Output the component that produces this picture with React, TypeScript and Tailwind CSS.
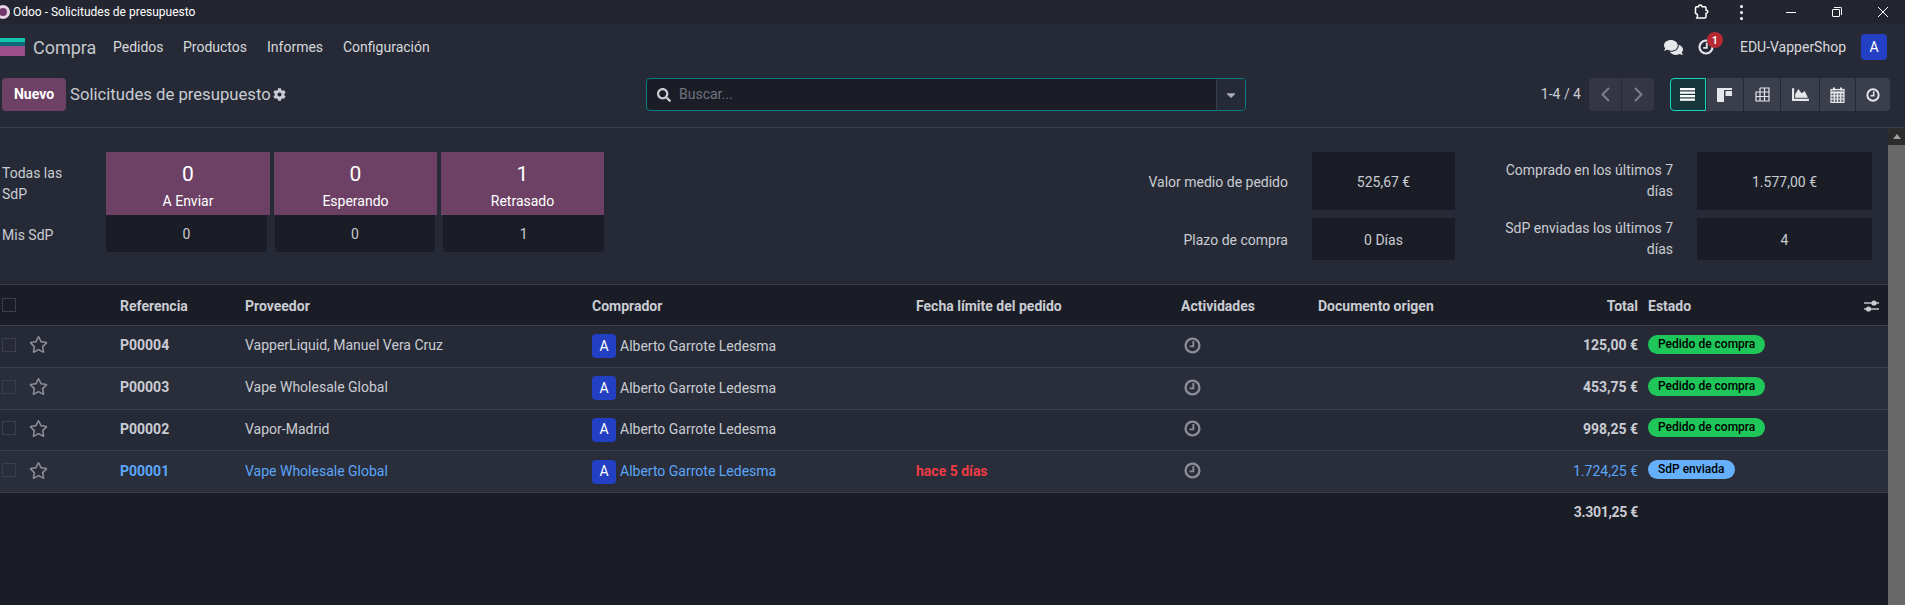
import React from "react";
import {
  FaCog,
  FaComments,
  FaSearch,
  FaRegStar,
  FaChartArea,
  FaCaretDown,
} from "react-icons/fa";

const tableCols =
  "grid grid-cols-[120px_125px_347px_324px_265px_137px_220px_100px_1fr]";

type Row = {
  ref: string;
  vendor: string;
  deadline?: string;
  total: string;
  status: string;
  late?: boolean;
};

const rows: Row[] = [
  { ref: "P00004", vendor: "VapperLiquid, Manuel Vera Cruz", total: "125,00 €", status: "Pedido de compra" },
  { ref: "P00003", vendor: "Vape Wholesale Global", total: "453,75 €", status: "Pedido de compra" },
  { ref: "P00002", vendor: "Vapor-Madrid", total: "998,25 €", status: "Pedido de compra" },
  { ref: "P00001", vendor: "Vape Wholesale Global", deadline: "hace 5 días", total: "1.724,25 €", status: "SdP enviada", late: true },
];

const ClockIcon = ({ size, color }: { size: number; color: string }) => (
  <svg width={size} height={size} viewBox="0 0 16 16" fill="none" stroke={color}>
    <circle cx="8" cy="8" r="6.500" strokeWidth="2.200" />
    <path d="M8.800 3.800v5H5.200" strokeWidth="1.800" />
  </svg>
);

const ListIcon = () => (
  <svg width="16" height="13" viewBox="0 0 16 13" fill="#fff">
    <rect y="0" width="15" height="2.300" />
    <rect y="3.500" width="15" height="2.300" />
    <rect y="7" width="15" height="2.300" />
    <rect y="10.500" width="15" height="2.300" />
  </svg>
);

const KanbanIcon = () => (
  <svg width="16" height="14" viewBox="0 0 16 14" fill="#e5e7eb">
    <rect x="0" y="0" width="15" height="2" />
    <path d="M0 2h7v12H0z" />
    <rect x="8.500" y="3" width="6.500" height="5" />
  </svg>
);

const PivotIcon = () => (
  <svg width="15" height="15" viewBox="0 0 15 15" fill="none" stroke="#e5e7eb" strokeWidth="1.200">
    <path d="M5 1h9v13H1V5h13M5 1v13M9.500 1v13M1 9.500h13" />
  </svg>
);

const CalendarIcon = () => (
  <svg width="15" height="16" viewBox="0 0 15 16" fill="none" stroke="#e5e7eb" strokeWidth="1.200">
    <rect x="1" y="2.500" width="13" height="13" fill="#e5e7eb" fillOpacity="0.25" />
    <path d="M1 5.500h13" strokeWidth="2" />
    <path d="M1 8.800h13M1 12h13M4.300 6v9M7.500 6v9M10.700 6v9" />
    <path d="M4 0.500v3M11 0.500v3" strokeWidth="2" />
  </svg>
);

const ExtensionIcon = () => (
  <svg width="16" height="16" viewBox="0 0 16 16" fill="none" stroke="#fff" strokeWidth="1.500">
    <path
      d="M1.500 4c0-.8.5-1.300 1.200-1.300h1.800c0-2.200 3.500-2.200 3.500 0h2.800c.7 0 1.200.5 1.200 1.200v2.300c2.300-.3 2.300 3.300 0 3v3.600c0 .7-.5 1.200-1.200 1.200H2.500c1.800-1.300 1.300-4.500-1-4.500z"
      strokeLinejoin="round"
    />
  </svg>
);

const SlidersIcon = () => (
  <svg width="15" height="12" viewBox="0 0 15 12" fill="#c9ccd2">
    <rect y="2.300" width="15" height="1.400" />
    <rect y="8.300" width="15" height="1.400" />
    <circle cx="10" cy="3" r="2.600" />
    <circle cx="4.500" cy="9" r="2.600" />
  </svg>
);

const Chevron = ({ d }: { d: string }) => (
  <svg width="11" height="15" viewBox="0 0 11 15" fill="none" stroke="#7c7f8a" strokeWidth="2">
    <path d={d} />
  </svg>
);

const TitleBar = () => (
  <div className="h-[24px] shrink-0 bg-[#232630] flex items-center text-white text-[12px] leading-none">
    <span className="w-[14px] h-[14px] rounded-full border-[3px] border-[#e8d5e3] bg-[#71396a] -ml-[4px] mr-[3px]" />
    <span>Odoo - Solicitudes de presupuesto</span>
    <div className="ml-auto flex items-center">
      <ExtensionIcon />
      <div className="ml-[30px] flex flex-col gap-[3px]">
        <span className="w-[3px] h-[3px] rounded-full bg-white" />
        <span className="w-[3px] h-[3px] rounded-full bg-white" />
        <span className="w-[3px] h-[3px] rounded-full bg-white" />
      </div>
      <span className="ml-[43px] w-[10px] h-px bg-white" />
      <span className="ml-[36px] relative w-[10px] h-[10px]">
        <span className="absolute top-[2px] left-0 w-[8px] h-[8px] border border-white rounded-[1px]" />
        <span className="absolute top-0 left-[2px] w-[8px] h-[8px] border-t border-r border-white rounded-tr-[2px]" />
      </span>
      <svg className="ml-[36px] mr-[17px]" width="10" height="10" viewBox="0 0 10 10" stroke="#fff">
        <path d="M0 0l10 10M10 0L0 10" />
      </svg>
    </div>
  </div>
);

const NavBar = () => (
  <div className="h-[46px] shrink-0 flex items-center text-[#d7d9dd] text-[14px]">
    <div className="w-[25px] h-[18px] flex flex-col shrink-0">
      <span className="h-[4px] bg-[#14c4ae]" />
      <span className="h-[4px] bg-[#0f6a78]" />
      <span className="h-[10px] bg-[#9a4f8a] rounded-br-[1px]" />
    </div>
    <span className="ml-[8px] w-[80px] text-[18px] text-[#c3c6cc]">Compra</span>
    <span className="w-[70px] pt-[1px]">Pedidos</span>
    <span className="w-[84px] pt-[1px]">Productos</span>
    <span className="w-[76px] pt-[1px]">Informes</span>
    <span className="pt-[1px]">Configuración</span>
    <div className="ml-auto flex items-center">
      <FaComments className="text-[#e5e7eb] text-[19px]" />
      <div className="relative ml-[15px]">
        <ClockIcon size={16} color="#e5e7eb" />
        <span className="absolute -top-[7px] left-[9px] w-[16px] h-[16px] rounded-full bg-[#b52a32] text-white text-[10px] font-bold flex items-center justify-center">
          1
        </span>
      </div>
      <span className="ml-[26px] text-[14px]">EDU-VapperShop</span>
      <span className="ml-[15px] mr-[18px] w-[26px] h-[26px] rounded-[4px] bg-[#2340c4] text-white text-[14px] flex items-center justify-center">
        A
      </span>
    </div>
  </div>
);

const ControlPanel = () => (
  <div className="h-[58px] shrink-0 border-b border-[#3c3e4b] pb-[16px] pt-[8px] flex items-center text-[#c9ccd2]">
    <button className="ml-[2px] w-[64px] h-[33px] rounded-[4px] bg-[#6d4165] text-white text-[14px] font-bold">
      Nuevo
    </button>
    <span className="ml-[4px] w-[203px] text-[16.7px] whitespace-nowrap">Solicitudes de presupuesto</span>
    <FaCog className="text-[13px] text-[#c9ccd2]" />
    <div className="ml-[360px] w-[600px] h-[33px] flex rounded-[4px] border border-[#017e84] bg-[#1b1d26]">
      <div className="flex-1 flex items-center pl-[10px]">
        <FaSearch className="text-[14px] text-[#c9ccd2]" />
        <span className="ml-[8px] text-[14px] text-[#70737f]">Buscar...</span>
      </div>
      <div className="w-[29px] border-l border-[#3c3e4b] bg-[#262a36] rounded-r-[3px] flex items-center justify-center">
        <FaCaretDown className="text-[14px] text-[#a9acb4]" />
      </div>
    </div>
    <span className="ml-auto text-[14px]">1-4 / 4</span>
    <div className="ml-[8px] flex gap-px">
      <span className="w-[32px] h-[33px] rounded-l-[4px] bg-[#343743] flex items-center justify-center">
        <Chevron d="M9 1L2.500 7.500 9 14" />
      </span>
      <span className="w-[32px] h-[33px] rounded-r-[4px] bg-[#343743] flex items-center justify-center">
        <Chevron d="M2 1l6.500 6.500L2 14" />
      </span>
    </div>
    <div className="ml-[16px] mr-[15px] flex gap-px">
      <span className="w-[36px] h-[33px] rounded-l-[4px] border border-[#14d8c4] bg-[#17363a] flex items-center justify-center">
        <ListIcon />
      </span>
      <span className="w-[36px] h-[33px] bg-[#3b3e4b] flex items-center justify-center">
        <KanbanIcon />
      </span>
      <span className="w-[36px] h-[33px] bg-[#3b3e4b] flex items-center justify-center">
        <PivotIcon />
      </span>
      <span className="w-[38px] h-[33px] bg-[#3b3e4b] flex items-center justify-center">
        <FaChartArea className="text-[17px] text-[#e5e7eb]" />
      </span>
      <span className="w-[35px] h-[33px] bg-[#3b3e4b] flex items-center justify-center">
        <CalendarIcon />
      </span>
      <span className="w-[34px] h-[33px] rounded-r-[4px] bg-[#3b3e4b] flex items-center justify-center">
        <ClockIcon size={14} color="#e5e7eb" />
      </span>
    </div>
  </div>
);

const Dashboard = () => (
  <div className="h-[157px] border-b border-[#3c3e4b] pt-[24px] flex text-[14px] text-[#c9ccd2] leading-[21px]">
    <div className="w-[106px] pl-[2px] shrink-0">
      <div className="h-[63px] flex items-center w-[80px]">Todas las SdP</div>
      <div className="h-[37px] flex items-center pt-[3px]">Mis SdP</div>
    </div>
    <div className="w-[498px] shrink-0">
      <div className="flex gap-[4px] h-[63px]">
        {[
          ["0", "A Enviar", "w-[164px]"],
          ["0", "Esperando", "w-[163px]"],
          ["1", "Retrasado", "w-[163px]"],
        ].map(([n, label, w]) => (
          <div key={label} className={`${w} bg-[#6d4165] text-white flex flex-col items-center pt-[9px]`}>
            <span className="text-[21px] leading-[26px]">{n}</span>
            <span className="text-[14px] leading-[22px] mt-[3px]">{label}</span>
          </div>
        ))}
      </div>
      <div className="flex gap-[8px] h-[37px]">
        {["0", "0", "1"].map((n, i) => (
          <div key={i} className="w-[161px] bg-[#1b1d26] rounded-b-[4px] flex items-center justify-center pt-[2px]">
            {n}
          </div>
        ))}
      </div>
    </div>
    <div className="ml-auto mr-[16px] shrink-0 grid grid-cols-[208px_143px_242px_175px] grid-rows-[58px_42px] gap-y-[8px]">
      <div className="flex items-center justify-end pr-[24px] pt-[2px]">Valor medio de pedido</div>
      <div className="bg-[#1b1d26] flex items-center justify-center pt-[2px]">525,67 €</div>
      <div className="flex items-center justify-end pr-[24px] text-right">
        <span className="w-[175px]">Comprado en los últimos 7 días</span>
      </div>
      <div className="bg-[#1b1d26] flex items-center justify-center pt-[2px]">1.577,00 €</div>
      <div className="flex items-center justify-end pr-[24px] pt-[2px]">Plazo de compra</div>
      <div className="bg-[#1b1d26] flex items-center justify-center pt-[2px]">0 Días</div>
      <div className="flex items-center justify-end pr-[24px] text-right">
        <span className="w-[175px]">SdP enviadas los últimos 7 días</span>
      </div>
      <div className="bg-[#1b1d26] flex items-center justify-center pt-[2px]">4</div>
    </div>
  </div>
);

const TableHeader = () => (
  <div className={`${tableCols} h-[41px] shrink-0 bg-[#1b1d26] border-b border-[#3c3e4b] pt-[2px] items-center text-[14px] font-bold text-[#c9ccd2]`}>
    <div className="pl-[2px] -mt-[2px]">
      <span className="block w-[14px] h-[14px] border border-[#3c3e4b]" />
    </div>
    <span>Referencia</span>
    <span>Proveedor</span>
    <span>Comprador</span>
    <span>Fecha límite del pedido</span>
    <span>Actividades</span>
    <span>Documento origen</span>
    <span className="text-right">Total</span>
    <div className="pl-[10px] flex items-center justify-between pr-[9px]">
      <span>Estado</span>
      <SlidersIcon />
    </div>
  </div>
);

const TableRow = ({ row, striped }: { row: Row; striped: boolean }) => {
  const color = row.late ? "text-[#5aa6f8]" : "text-[#c9ccd2]";
  return (
    <div
      className={`${tableCols} h-[41.75px] shrink-0 border-b border-[#3c3e4b] items-center text-[14px] ${color} ${
        striped ? "bg-[#2a2e3a]" : "bg-[#262a36]"
      }`}
    >
      <div className="pl-[2px] flex items-center -mt-[3px]">
        <span className="block w-[14px] h-[14px] border border-[#3c3e4b]" />
        <FaRegStar className="ml-[13px] text-[19px] text-[#8a8d96]" />
      </div>
      <span className="font-bold -mt-[1px]">{row.ref}</span>
      <span className="-mt-[1px]">{row.vendor}</span>
      <div className="flex items-center">
        <span className="w-[24px] h-[24px] rounded-[4px] bg-[#2340c4] text-white flex items-center justify-center">
          A
        </span>
        <span className="ml-[4px]">Alberto Garrote Ledesma</span>
      </div>
      <span className="font-bold text-[#ef3b45] -mt-[1px]">{row.deadline}</span>
      <div className="pl-[3px] -mt-[2px]">
        <ClockIcon size={17} color="#8a8d96" />
      </div>
      <span />
      <span className={`text-right -mt-[1px] ${row.late ? "" : "font-bold"}`}>{row.total}</span>
      <div className="pl-[10px] flex -mt-[4px]">
        <span
          className={`h-[19px] px-[10px] rounded-full text-[12px] font-medium leading-[19px] text-black ${
            row.late ? "bg-[#66b0fb]" : "bg-[#1fc75a]"
          }`}
        >
          {row.status}
        </span>
      </div>
    </div>
  );
};

const ScrollBar = () => (
  <div className="w-[17px] shrink-0 bg-[#2c2c2c] flex flex-col">
    <div className="h-[17px] flex items-center justify-center">
      <span className="border-x-[4px] border-x-transparent border-b-[5px] border-b-[#a0a0a0]" />
    </div>
    <div className="flex-1 bg-[#686868]" />
  </div>
);

export default function App() {
  return (
    <div className="w-screen h-screen overflow-hidden flex flex-col bg-[#262a36] font-['Roboto',sans-serif]">
      <TitleBar />
      <NavBar />
      <ControlPanel />
      <div className="flex-1 flex min-h-0">
        <div className="flex-1 min-w-0 flex flex-col bg-[#1b1d26]">
          <div className="bg-[#262a36]">
            <Dashboard />
          </div>
          <TableHeader />
          {rows.map((row, i) => (
            <TableRow key={row.ref} row={row} striped={i % 2 === 1} />
          ))}
          <div className={`${tableCols} h-[38px] text-[14px] font-bold text-[#c9ccd2] items-center`}>
            <span className="col-start-8 text-right tracking-[-0.3px]">3.301,25 €</span>
          </div>
        </div>
        <ScrollBar />
      </div>
    </div>
  );
}
